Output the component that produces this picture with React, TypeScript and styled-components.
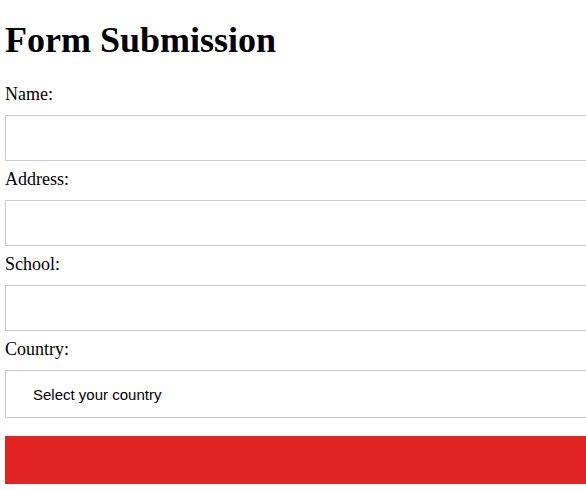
import React from "react";
import styled, { createGlobalStyle } from "styled-components";

const Global = createGlobalStyle`
  html, body {
    margin: 0;
    padding: 0;
    overflow: hidden;
    background: #ffffff;
  }
  body {
    font-family: "Liberation Serif", "Times New Roman", serif;
    color: #000;
  }
`;

const Page = styled.div`
  padding: 0 5px;
`;

const Title = styled.h1`
  font-family: "Liberation Serif", "Times New Roman", serif;
  font-size: 36px;
  font-weight: bold;
  margin: 19px 0 23px;
`;

const Form = styled.form`
  display: block;
`;

const Label = styled.label`
  display: block;
  font-size: 18px;
`;

const TextInput = styled.input`
  display: block;
  box-sizing: content-box;
  width: 100%;
  height: 44px;
  padding: 0 12px;
  margin: 10px 0 8px;
  border: 1px solid #cccccc;
  border-radius: 0;
  outline: none;
  font-family: "Liberation Sans", Arial, sans-serif;
  font-size: 15px;
  background: #fff;
`;

const Select = styled.select`
  display: block;
  box-sizing: content-box;
  width: 100%;
  height: 46px;
  padding: 0 0 0 27px;
  margin: 10px 0 18px;
  border: 1px solid #cccccc;
  border-radius: 0;
  appearance: none;
  -webkit-appearance: none;
  outline: none;
  background: #fff;
  color: #000;
  font-family: "Liberation Sans", Arial, sans-serif;
  font-size: 15px;
`;

const Submit = styled.button`
  display: block;
  box-sizing: content-box;
  width: 100%;
  height: 48px;
  padding: 0 12px;
  margin: 0;
  border: none;
  background: #e02424;
  box-shadow: 0 1px 0 #b8b8b8;
  color: #fff;
  font-size: 18px;
`;

export default function App() {
  return (
    <Page>
      <Global />
      <Title>Form Submission</Title>
      <Form onSubmit={(e) => e.preventDefault()}>
        <Label htmlFor="name">Name:</Label>
        <TextInput id="name" type="text" />
        <Label htmlFor="address">Address:</Label>
        <TextInput id="address" type="text" />
        <Label htmlFor="school">School:</Label>
        <TextInput id="school" type="text" />
        <Label htmlFor="country">Country:</Label>
        <Select id="country" defaultValue="">
          <option value="">Select your country</option>
        </Select>
        <Submit type="submit" aria-label="Submit" />
      </Form>
    </Page>
  );
}
